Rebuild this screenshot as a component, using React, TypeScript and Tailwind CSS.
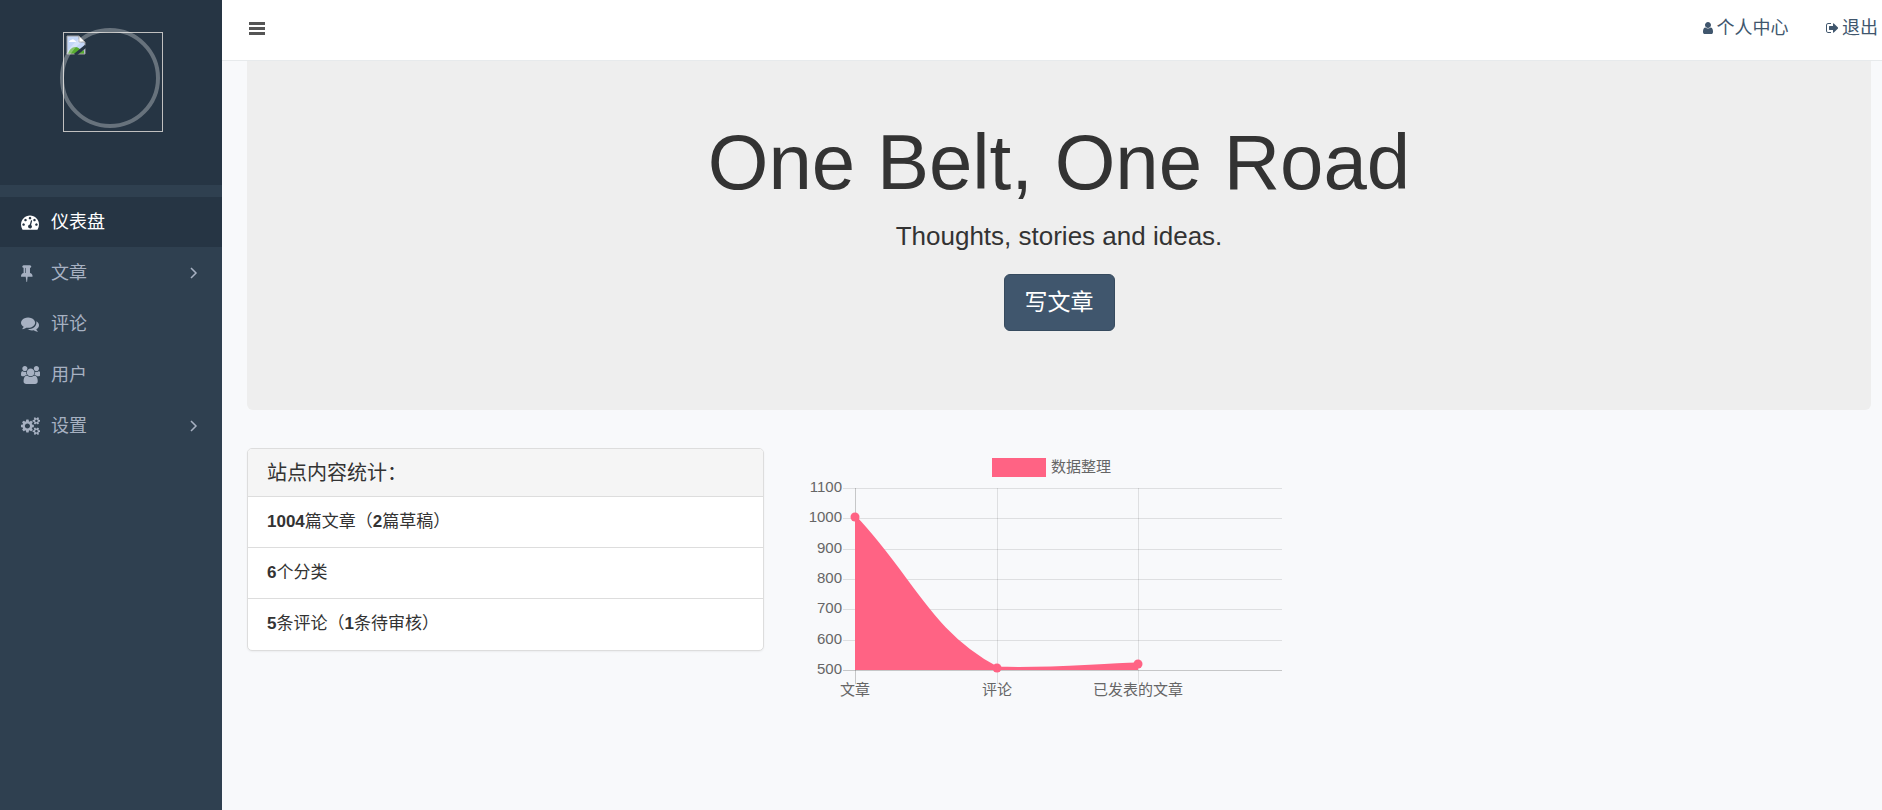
import type { ReactNode } from 'react'

const icons = {
  dashboard: {
    box: '0 0 1792 1792',
    d: 'M384 1152q0-53-37.5-90.5t-90.5-37.5-90.5 37.5-37.5 90.5 37.5 90.5 90.5 37.5 90.5-37.5 37.5-90.5zm192-448q0-53-37.5-90.5t-90.5-37.5-90.5 37.5-37.5 90.5 37.5 90.5 90.5 37.5 90.5-37.5 37.5-90.5zm428 481l101-382q6-26-7.5-48.5t-38.5-29.5-48 6.5-30 39.5l-101 382q-60 5-107 43.5t-63 98.5q-20 77 20 146t117 89 146-20 89-117q16-60-6-117t-72-91zm660-33q0-53-37.5-90.5t-90.5-37.5-90.5 37.5-37.5 90.5 37.5 90.5 90.5 37.5 90.5-37.5 37.5-90.5zm-640-640q0-53-37.5-90.5t-90.5-37.5-90.5 37.5-37.5 90.5 37.5 90.5 90.5 37.5 90.5-37.5 37.5-90.5zm448 192q0-53-37.5-90.5t-90.5-37.5-90.5 37.5-37.5 90.5 37.5 90.5 90.5 37.5 90.5-37.5 37.5-90.5zm320 448q0 261-141 483-19 29-54 29h-1402q-35 0-54-29-141-221-141-483 0-182 71-348t191-286 286-191 348-71 348 71 286 191 191 286 71 348z',
  },
  pin: {
    box: '320 0 1152 1792',
    d: 'M800 864v-448q0-14-9-23t-23-9-23 9-9 23v448q0 14 9 23t23 9 23-9 9-23zm672 352q0 26-19 45t-45 19h-429l-51 483q-2 12-10.5 20.5t-20.5 8.5h-1q-27 0-32-27l-76-485h-404q-26 0-45-19t-19-45q0-123 78.5-221.5t177.5-98.5v-512q-52 0-90-38t-38-90 38-90 90-38h640q52 0 90 38t38 90-38 90-90 38v512q99 0 177.5 98.5t78.5 221.5z',
  },
  comments: {
    box: '0 0 1792 1792',
    d: 'M1408 768q0 139-94 257t-256.5 186.5-353.5 68.5q-86 0-176-16-124 88-278 128-36 9-86 16h-3q-11 0-20.5-8t-11.5-21q-1-3-1-6.5t.5-6.5 2-6l2.5-5 3.5-5.5 4-5 4.5-5 4-4.5q5-6 23-25t26-29.5 22.5-29 25-38.5 20.5-44q-124-72-195-177t-71-224q0-139 94-257t256.5-186.5 353.5-68.5 353.5 68.5 256.5 186.5 94 257zm384 256q0 120-71 224.5t-195 176.5q10 24 20.5 44t25 38.5 22.5 29 26 29.5 23 25q1 1 4 4.5t4.5 5 4 5 3.5 5.5l2.5 5 2 6 .5 6.5-1 6.5q-3 14-13 22t-22 7q-50-7-86-16-154-40-278-128-90 16-176 16-271 0-472-132 58 4 88 4 161 0 309-45t264-129q125-92 192-212t67-254q0-77-23-152 129 71 204 178t75 230z',
  },
  users: {
    box: '64 0 1920 1792',
    d: 'M657 896q-162 5-265 128h-134q-82 0-138-40.5t-56-118.5q0-353 124-353 6 0 43.5 21t97.5 42.5 119 21.5q67 0 133-23-5 37-5 66 0 139 81 256zm1071 637q0 120-73 189.5t-194 69.5h-874q-121 0-194-69.5t-73-189.5q0-53 3.5-103.5t14-109 26.5-108.5 43-97.5 62-81 85.5-53.5 111.5-20q10 0 43 21.5t73 48 107 48 135 21.5 135-21.5 107-48 73-48 43-21.5q61 0 111.5 20t85.5 53.5 62 81 43 97.5 26.5 108.5 14 109 3.5 103.5zm-1024-1277q0 106-75 181t-181 75-181-75-75-181 75-181 181-75 181 75 75 181zm704 384q0 159-112.5 271.5t-271.5 112.5-271.5-112.5-112.5-271.5 112.5-271.5 271.5-112.5 271.5 112.5 112.5 271.5zm576 225q0 78-56 118.5t-138 40.5h-134q-103-123-265-128 81-117 81-256 0-29-5-66 66 23 133 23 59 0 119-21.5t97.5-42.5 43.5-21q124 0 124 353zm-128-609q0 106-75 181t-181 75-181-75-75-181 75-181 181-75 181 75 75 181z',
  },
  cogs: {
    box: '-64 0 1920 1792',
    d: 'M832 896q0-106-75-181t-181-75-181 75-75 181 75 181 181 75 181-75 75-181zm768 512q0-52-38-90t-90-38-90 38-38 90q0 53 37.5 90.5t90.5 37.5 90.5-37.5 37.5-90.5zm0-1024q0-52-38-90t-90-38-90 38-38 90q0 53 37.5 90.5t90.5 37.5 90.5-37.5 37.5-90.5zm-384 421v185q0 10-7 19.5t-16 10.5l-155 24q-11 35-32 76 34 48 90 115 7 11 7 20 0 12-7 19-23 30-82.5 89.5t-78.5 59.5q-11 0-21-7l-115-90q-37 19-77 31-11 108-23 155-7 24-30 24h-186q-11 0-20-7.5t-10-17.5l-23-153q-34-10-75-31l-118 89q-7 7-20 7-11 0-21-8-144-133-144-160 0-9 7-19 10-14 41-53t47-61q-23-44-35-82l-152-24q-10-1-17-9.5t-7-19.5v-185q0-10 7-19.5t16-10.5l155-24q11-35 32-76-34-48-90-115-7-11-7-20 0-12 7-20 22-30 82-89t79-59q11 0 21 7l115 90q34-18 77-32 11-108 23-154 7-24 30-24h186q11 0 20 7.5t10 17.5l23 153q34 10 75 31l118-89q8-7 20-7 11 0 21 8 144 133 144 160 0 8-7 19-12 16-42 54t-45 60q23 48 34 82l152 23q10 2 17 10.5t7 19.5zm640 533v140q0 16-149 31-12 27-30 52 51 113 51 138 0 4-4 7-122 71-124 71-8 0-46-47t-52-68q-20 2-30 2t-30-2q-14 21-52 68t-46 47q-2 0-124-71-4-3-4-7 0-25 51-138-18-25-30-52-149-15-149-31v-140q0-16 149-31 13-29 30-52-51-113-51-138 0-4 4-7 4-2 35-20t59-34 30-16q8 0 46 46.5t52 67.5q20-2 30-2t30 2q51-71 92-112l6-2q4 0 124 70 4 3 4 7 0 25-51 138 17 23 30 52 149 15 149 31zm0-1024v140q0 16-149 31-12 27-30 52 51 113 51 138 0 4-4 7-122 71-124 71-8 0-46-47t-52-68q-20 2-30 2t-30-2q-14 21-52 68t-46 47q-2 0-124-71-4-3-4-7 0-25 51-138-18-25-30-52-149-15-149-31v-140q0-16 149-31 13-29 30-52-51-113-51-138 0-4 4-7 4-2 35-20t59-34 30-16q8 0 46 46.5t52 67.5q20-2 30-2t30 2q51-71 92-112l6-2q4 0 124 70 4 3 4 7 0 25-51 138 17 23 30 52 149 15 149 31z',
  },
  user: {
    box: '256 0 1280 1792',
    d: 'M1536 1399q0 109-62.5 187t-150.5 78h-854q-88 0-150.5-78t-62.5-187q0-85 8.5-160.5t31.5-152 58.5-131 94-89 134.5-34.5q131 128 313 128t313-128q76 0 134.5 34.5t94 89 58.5 131 31.5 152 8.5 160.5zm-256-887q0 159-112.5 271.5t-271.5 112.5-271.5-112.5-112.5-271.5 112.5-271.5 271.5-112.5 271.5 112.5 112.5 271.5z',
  },
  signOut: {
    box: '64 0 1600 1792',
    d: 'M704 1440q0 4 1 20t.5 26.5-3 23.5-10 19.5-20.5 6.5h-320q-119 0-203.5-84.5t-84.5-203.5v-704q0-119 84.5-203.5t203.5-84.5h320q13 0 22.5 9.5t9.5 22.5q0 4 1 20t.5 26.5-3 23.5-10 19.5-20.5 6.5h-320q-66 0-113 47t-47 113v704q0 66 47 113t113 47h312l11.5 1 11.5 3 8 5.5 7 9 2 13.5zm928-544q0 26-19 45l-544 544q-19 19-45 19t-45-19-19-45v-288h-448q-26 0-45-19t-19-45v-384q0-26 19-45t45-19h448v-288q0-26 19-45t45-19 45 19l544 544q19 19 19 45z',
  },
}

type IconName = keyof typeof icons

const Icon = ({ name, className }: { name: IconName; className: string }) => (
  <svg viewBox={icons[name].box} fill="currentColor" className={className} aria-hidden="true">
    <path d={icons[name].d} />
  </svg>
)

const menu: { label: string; icon: IconName; active?: boolean; children?: boolean }[] = [
  { label: '仪表盘', icon: 'dashboard', active: true },
  { label: '文章', icon: 'pin', children: true },
  { label: '评论', icon: 'comments' },
  { label: '用户', icon: 'users' },
  { label: '设置', icon: 'cogs', children: true },
]

const Avatar = () => (
  <div className="relative size-[100px] border border-[#c0c0c0]">
    <svg viewBox="0 0 20 20" className="m-0.5 size-5" aria-hidden="true">
      <path d="M1 1h12l6 6v12H1z" fill="#c3d6f7" />
      <path d="M2 19c1-4 4-7 7-7 3 0 5 2 7 4l2-1v4z" fill="#56ab2f" />
      <path d="M3 7c0-1 1-2 2-2 1-1 3-1 3 0 1 0 2 1 2 2z" fill="#fff" />
      <path d="M1 1h12l6 6v12H1z" fill="none" stroke="#a0a0a0" />
      <path d="M13 1v6h6z" fill="#fff" stroke="#a0a0a0" />
      <path d="M9 20L20 11" stroke="#263544" strokeWidth="3" />
    </svg>
    <span className="absolute -top-[5px] -left-1 size-[100px] rounded-full border-4 border-white/30" />
  </div>
)

const Sidebar = () => (
  <aside className="w-[222px] shrink-0 bg-[#2f4050]">
    <div className="flex h-[185px] justify-center bg-[#263544] pt-8 pl-1">
      <Avatar />
    </div>
    <nav className="mt-3">
      <ul>
        {menu.map((item) => (
          <li key={item.label} className="mb-px">
            <a
              href="#"
              className={
                item.active
                  ? 'flex h-[50px] items-center bg-[#263544] pr-6 pl-[21px] text-white'
                  : 'flex h-[50px] items-center pr-6 pl-[21px] text-[#a7b1c2]'
              }
            >
              <span className="w-[30px]">
                <Icon name={item.icon} className="h-[18px]" />
              </span>
              <span className="flex-1">{item.label}</span>
              {item.children && (
                <svg viewBox="0 0 8 12" className="h-3 w-2" fill="none" stroke="currentColor" strokeWidth="1.500" aria-hidden="true">
                  <path d="M1 1l5 5-5 5" />
                </svg>
              )}
            </a>
          </li>
        ))}
      </ul>
    </nav>
  </aside>
)

const Topbar = () => (
  <header className="flex h-[61px] items-center justify-between border-b border-[#e7eaec] bg-white pr-1 pb-1 pl-[27px]">
    <button type="button" aria-label="菜单" className="flex w-4 flex-col gap-0.5">
      <span className="h-[3px] bg-[#555]" />
      <span className="h-[3px] bg-[#555]" />
      <span className="h-[3px] bg-[#555]" />
    </button>
    <nav className="flex gap-[37px] text-[#40566d]">
      <a href="#" className="flex items-center gap-1">
        <Icon name="user" className="h-3.5" />
        个人中心
      </a>
      <a href="#" className="flex items-center gap-1">
        <Icon name="signOut" className="h-3.5" />
        退出
      </a>
    </nav>
  </header>
)

const Row = ({ children }: { children: ReactNode }) => (
  <li className="flex h-[51px] items-center border-t border-[#ddd] px-[19px] text-[17px]">
    <p>{children}</p>
  </li>
)

const Stats = () => (
  <section className="self-start overflow-hidden rounded-[5px] border border-[#ddd] bg-white shadow-xs">
    <h2 className="flex h-[47px] items-center bg-[#f5f5f5] px-[19px] text-xl">站点内容统计：</h2>
    <ul className="pb-px">
      <Row><b className="font-bold">1004</b>篇文章（<b className="font-bold">2</b>篇草稿）</Row>
      <Row><b className="font-bold">6</b>个分类</Row>
      <Row><b className="font-bold">5</b>条评论（<b className="font-bold">1</b>条待审核）</Row>
    </ul>
  </section>
)

const ticks = [1100, 1000, 900, 800, 700, 600, 500]
const points = [
  { label: '文章', x: 54, y: 69 },
  { label: '评论', x: 196, y: 220 },
  { label: '已发表的文章', x: 337, y: 216 },
]
const yOf = (value: number) => Math.round(40 + ((1100 - value) / 600) * 182)

const Chart = () => (
  <svg viewBox="0 0 500 250" className="w-[500px] max-w-full" fill="#666" fontSize="15" role="img" aria-label="数据整理">
    <rect x="191" y="10" width="54" height="19" fill="#ff6384" />
    <text x="250" y="24">数据整理</text>
    <g shapeRendering="crispEdges">
      {ticks.map((t) => (
        <rect key={t} x="42" y={yOf(t)} width="439" height="1" fill="#000" fillOpacity={t === 500 ? 0.2 : 0.1} />
      ))}
      {points.map((p, i) => (
        <rect key={p.label} x={p.x} y="40" width="1" height="196" fill="#000" fillOpacity={i === 0 ? 0.2 : 0.1} />
      ))}
    </g>
    {ticks.map((t) => (
      <text key={t} x="41" y={yOf(t) + 4} textAnchor="end">{t}</text>
    ))}
    {points.map((p) => (
      <text key={p.label} x={p.x} y="247" textAnchor="middle">{p.label}</text>
    ))}
    <path d="M54 69C111 129 129 185 196 220C242 222 281 218 337 216V222H54Z" fill="#ff6384" />
    <path d="M54 69C111 129 129 185 196 220C242 222 281 218 337 216" fill="none" stroke="#ff6384" strokeWidth="3" />
    {points.map((p) => (
      <circle key={p.label} cx={p.x} cy={p.y} r="4.500" fill="#ff6384" />
    ))}
  </svg>
)

export default function App() {
  return (
    <div className="flex min-h-screen bg-[#f8f9fb] font-['Liberation_Sans','Noto_Sans_CJK_SC',sans-serif] text-lg text-[#333]">
      <Sidebar />
      <div className="min-w-0 flex-1">
        <Topbar />
        <main className="pr-[11px] pl-[25px]">
          <section className="flex flex-col items-center rounded-b-md bg-[#eee] pt-[58px] pb-[79px] text-center">
            <h1 className="text-[78px] leading-[87px]">One Belt, One Road</h1>
            <p className="mt-3 text-[26px] leading-[37px]">Thoughts, stories and ideas.</p>
            <button
              type="button"
              className="mt-[19px] h-[57px] rounded-md border border-[#364a5e] bg-[#40566d] px-5 text-[23px] text-white"
            >
              写文章
            </button>
          </section>
          <div className="mt-[38px] grid grid-cols-3 gap-[37px]">
            <Stats />
            <Chart />
          </div>
        </main>
      </div>
    </div>
  )
}
